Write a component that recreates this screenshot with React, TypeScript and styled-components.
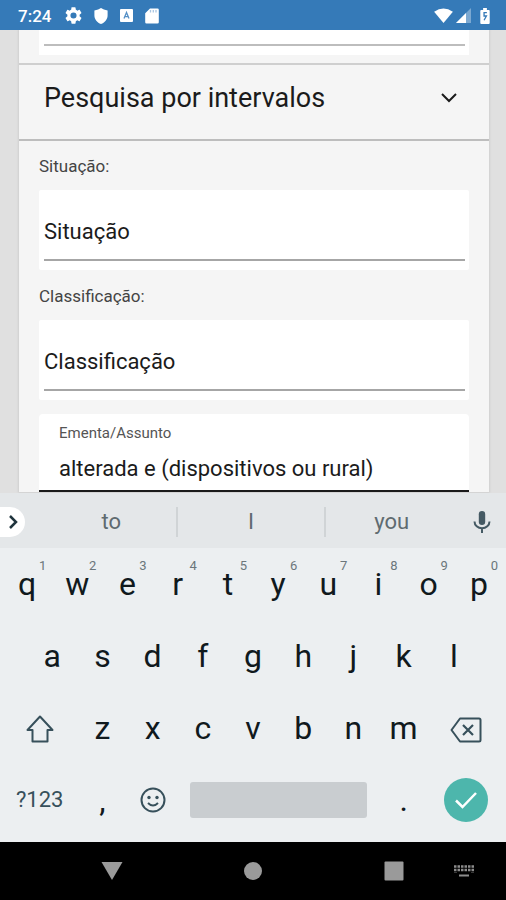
import React from "react";
import styled, { createGlobalStyle } from "styled-components";

const GlobalStyle = createGlobalStyle`
  *, *::before, *::after { box-sizing: border-box; }
  body {
    margin: 0;
    background: #000;
    font-family: Roboto, "Liberation Sans", sans-serif;
    color: #1b1b1b;
  }
  button, input {
    font: inherit;
    color: inherit;
    border: 0;
    padding: 0;
    margin: 0;
    background: none;
    border-radius: 0;
    outline: none;
  }
  svg { display: block; }
`;

const Screen = styled.div`
  display: flex;
  flex-direction: column;
  height: 100vh;
  min-height: 600px;
`;

const StatusBar = styled.header`
  display: flex;
  flex: none;
  align-items: center;
  height: 30px;
  padding: 1px 16px 0 18px;
  background: #357ab8;
  color: #fff;
`;

const Clock = styled.span`
  font-size: 17px;
  font-weight: 500;
  line-height: 20px;
`;

const StatusGroup = styled.div`
  display: flex;
  align-items: center;
  gap: 12px;
  margin-left: 14px;
`;

const SignalGroup = styled.div`
  display: flex;
  align-items: center;
  gap: 3px;
  margin-left: auto;
  margin-right: 9px;
`;

const Viewport = styled.main`
  flex: 1;
  min-height: 0;
  overflow: hidden;
  padding: 0 17px 0 19px;
  background: #e0e0e0;
`;

const Card = styled.form`
  background: #f5f5f5;
  box-shadow: 0 0 2px 1px #cfcfcf;
`;

const PreviousSection = styled.div`
  padding: 0 20px 8px;
  border-bottom: 2px solid #cfcfcf;
`;

const PreviousField = styled.div`
  height: 25px;
  padding: 14px 4px 0 5px;
  background: #fff;

  &::before {
    content: "";
    display: block;
    height: 2px;
    background: #bdbdbd;
  }
`;

const SectionToggle = styled.button`
  display: flex;
  align-items: center;
  justify-content: space-between;
  width: 100%;
  height: 76px;
  padding: 0 31px 8px 25px;
  border-bottom: 2px solid #bdbdbd;
  font-size: 27px;
  line-height: 32px;
  text-align: left;
  cursor: pointer;
`;

const Section = styled.div`
  padding: 13px 20px 0;
`;

const FieldLabel = styled.label`
  display: block;
  margin-bottom: 11px;
  color: #444;
  font-size: 17px;
  line-height: 25px;
`;

const SelectBox = styled.div`
  height: 80px;
  margin-bottom: 14px;
  padding: 12px 4px 9px 5px;
  border-radius: 2px;
  background: #fff;
`;

const SelectInput = styled.input`
  display: block;
  width: 100%;
  height: 59px;
  padding-top: 2px;
  border-bottom: 2px solid #a6a6a6;
  font-size: 22px;
  line-height: 28px;

  &::placeholder {
    color: #1b1b1b;
    opacity: 1;
  }
`;

const TextBox = styled.div`
  padding: 8px 0 0;
  border-radius: 4px 4px 0 0;
  background: #fff;
`;

const FloatingLabel = styled.label`
  display: block;
  padding: 0 20px;
  color: #555;
  font-size: 15px;
  line-height: 22px;
`;

const TextInput = styled.input`
  display: block;
  width: 100%;
  height: 48px;
  padding: 2px 20px 0;
  border-bottom: 2px solid #1b1b1b;
  font-size: 22px;
  line-height: 28px;
`;

const Keyboard = styled.section`
  flex: none;
  padding-bottom: 6px;
  background: #eceff1;
`;

const Suggestions = styled.div`
  display: grid;
  grid-template-columns: 46px 9fr 10fr 9fr 48px;
  align-items: center;
  height: 55px;
  padding-top: 2px;
  background: #e4e7e9;
`;

const ExpandButton = styled.button`
  display: flex;
  align-items: center;
  justify-content: center;
  width: 25px;
  height: 30px;
  border-radius: 0 15px 15px 0;
  background: #fff;
`;

const Suggestion = styled.button<{ $divided?: boolean }>`
  height: 30px;
  border-right: ${(p) => (p.$divided ? "2px solid #d0d4d6" : "0")};
  color: #5f6b70;
  font-size: 22px;
  line-height: 28px;
`;

const MicButton = styled.button`
  display: flex;
  justify-content: center;
`;

const Keys = styled.div`
  display: grid;
  grid-template-columns: repeat(20, 1fr);
  grid-auto-rows: 72px;
  padding: 0 2px;
`;

const Key = styled.button<{ $span?: number; $start?: number; $small?: boolean }>`
  position: relative;
  display: flex;
  align-items: center;
  justify-content: center;
  grid-column: ${(p) => (p.$start ? p.$start : "auto")} / span ${(p) => p.$span ?? 2};
  color: ${(p) => (p.$small ? "#37505b" : "#10191d")};
  font-size: ${(p) => (p.$small ? "22px" : "32px")};
  line-height: 40px;
`;

const KeyHint = styled.span`
  position: absolute;
  top: 10px;
  right: 6px;
  color: #6b767b;
  font-size: 13px;
  line-height: 16px;
`;

const SpaceKey = styled.button`
  grid-column: span 8;
  align-self: center;
  height: 36px;
  margin: 0 12px;
  border-radius: 3px;
  background: #c9cdd0;
`;

const EnterDisc = styled.span`
  display: flex;
  align-items: center;
  justify-content: center;
  width: 44px;
  height: 44px;
  border-radius: 50%;
  background: #4db6ac;
`;

const NavBar = styled.nav`
  display: grid;
  flex: none;
  grid-template-columns: repeat(36, 1fr);
  align-items: center;
  height: 58px;
  background: #000;
`;

const NavButton = styled.button<{ $from: number; $to: number }>`
  display: flex;
  justify-content: center;
  grid-column: ${(p) => p.$from} / ${(p) => p.$to};
  grid-row: 1;
`;

const GearIcon = () => (
  <svg width="17" height="17" viewBox="2 2 20 20" fill="#fff" aria-hidden="true">
    <path d="M19.14 12.94c.04-.3.06-.61.06-.94s-.02-.64-.07-.94l2.03-1.58a.49.49 0 0 0 .12-.61l-1.92-3.32a.49.49 0 0 0-.59-.22l-2.39.96a7 7 0 0 0-1.62-.94l-.36-2.54a.48.48 0 0 0-.48-.41h-3.84c-.24 0-.43.17-.47.41l-.36 2.54c-.59.24-1.13.57-1.62.94l-2.39-.96a.48.48 0 0 0-.59.22L2.74 8.87a.48.48 0 0 0 .12.61l2.03 1.58c-.05.3-.09.63-.09.94s.02.64.07.94l-2.03 1.58a.49.49 0 0 0-.12.61l1.92 3.32c.12.22.37.29.59.22l2.39-.96c.5.38 1.03.7 1.62.94l.36 2.54c.05.24.24.41.48.41h3.84c.24 0 .44-.17.47-.41l.36-2.54c.59-.24 1.13-.56 1.62-.94l2.39.96c.22.08.47 0 .59-.22l1.92-3.32a.48.48 0 0 0-.12-.61zM12 15.6a3.6 3.6 0 1 1 0-7.2 3.6 3.6 0 0 1 0 7.2z" />
  </svg>
);

const ShieldIcon = () => (
  <svg width="14" height="16" viewBox="0 0 14 16" fill="#fff" aria-hidden="true">
    <path d="M7 0 Q9.5 2 13.6 2.4 V7.5 C13.6 11.5 10.6 14.6 7 16 C3.4 14.6 .4 11.5 .4 7.5 V2.4 Q4.5 2 7 0z" />
  </svg>
);

const KeyboardBadgeIcon = () => (
  <svg width="13" height="13" viewBox="0 0 13 13" aria-hidden="true">
    <rect width="13" height="13" rx="1" fill="#fff" />
    <path d="M4 9.5 6.5 3.5 9 9.5M4.800 7.700h3.400" fill="none" stroke="#5590c6" strokeWidth="1.300" />
  </svg>
);

const SdCardIcon = () => (
  <svg width="14" height="16" viewBox="0 0 14 16" aria-hidden="true">
    <path d="M5 .5h7.500A1.300 1.300 0 0 1 13.800 1.800v12.400a1.300 1.300 0 0 1-1.300 1.300h-11A1.300 1.300 0 0 1 .2 14.200V5.200z" fill="#fff" />
    <path d="M5.500 2v2.500M8.300 2v2.500M11 2v2.500" stroke="#a9c6e2" strokeWidth="1.300" />
  </svg>
);

const WifiIcon = () => (
  <svg width="19" height="15" viewBox="0 0 20 16" fill="#fff" aria-hidden="true">
    <path d="M0 4 Q10-3 20 4 L10 16z" />
  </svg>
);

const SignalIcon = () => (
  <svg width="15" height="15" viewBox="0 0 15 15" aria-hidden="true">
    <path d="M15 0v15H0z" fill="#fff" opacity=".35" />
    <path d="M10 5v10H0z" fill="#fff" />
  </svg>
);

const BatteryIcon = () => (
  <svg width="10" height="16" viewBox="0 0 10 17" aria-hidden="true">
    <path d="M3 0h4v2h2a1 1 0 0 1 1 1v13a1 1 0 0 1-1 1H1a1 1 0 0 1-1-1V3a1 1 0 0 1 1-1h2z" fill="#fff" />
    <path d="M7 5H4V8.500h2.500L4 13" fill="none" stroke="#357ab8" strokeWidth="1.400" />
  </svg>
);

const ChevronDown = () => (
  <svg width="18" height="12" viewBox="0 0 18 12" fill="none" stroke="#1b1b1b" strokeWidth="2" aria-hidden="true">
    <path d="M2 2 9 9 16 2" />
  </svg>
);

const ChevronRight = () => (
  <svg width="10" height="14" viewBox="0 0 10 14" fill="none" stroke="#1f343d" strokeWidth="2.500" aria-hidden="true">
    <path d="M2 1 8 7 2 13" />
  </svg>
);

const MicIcon = () => (
  <svg width="18" height="24" viewBox="0 0 18 24" aria-hidden="true">
    <rect x="5.800" y="1" width="6.400" height="14" rx="3.200" fill="#455a64" />
    <path d="M1.500 11.500a7.500 6.800 0 0 0 15 0M9 18.500V23" fill="none" stroke="#455a64" strokeWidth="2" />
  </svg>
);

const ShiftIcon = () => (
  <svg width="28" height="30" viewBox="0 -2 28 30" fill="none" stroke="#37505b" strokeWidth="2" strokeLinejoin="round" aria-hidden="true">
    <path d="M14 1.500 26.500 15H21.500V26.500H6.500V15H1.500z" />
  </svg>
);

const BackspaceIcon = () => (
  <svg width="32" height="30" viewBox="0 -4 32 30" fill="none" stroke="#37505b" strokeWidth="2" strokeLinejoin="round" aria-hidden="true">
    <path d="M10 1.500H29A1.500 1.500 0 0 1 30.500 3V23A1.500 1.500 0 0 1 29 24.500H10L1.500 13z" />
    <path d="M13 8 23 18M23 8 13 18" strokeWidth="2.200" />
  </svg>
);

const SmileIcon = () => (
  <svg width="26" height="26" viewBox="0 0 26 26" aria-hidden="true">
    <circle cx="13" cy="13" r="11.500" fill="none" stroke="#37505b" strokeWidth="2" />
    <circle cx="9" cy="10.500" r="1.700" fill="#37505b" />
    <circle cx="17" cy="10.500" r="1.700" fill="#37505b" />
    <path d="M8 16 Q13 21 18 16" fill="none" stroke="#37505b" strokeWidth="2" />
  </svg>
);

const CheckIcon = () => (
  <svg width="24" height="18" viewBox="0 0 24 18" fill="none" stroke="#fff" strokeWidth="2.500" aria-hidden="true">
    <path d="M2 9.500 8.500 16 22 2" />
  </svg>
);

const BackIcon = () => (
  <svg width="22" height="18" viewBox="0 0 22 18" fill="#9a9a9a" aria-hidden="true">
    <path d="M.5 0h21L11 18z" />
  </svg>
);

const HomeIcon = () => (
  <svg width="18" height="18" viewBox="0 0 18 18" fill="#9a9a9a" aria-hidden="true">
    <circle cx="9" cy="9" r="9" />
  </svg>
);

const RecentsIcon = () => (
  <svg width="20" height="20" viewBox="0 0 20 20" fill="#9a9a9a" aria-hidden="true">
    <rect x=".5" y=".5" width="19" height="19" rx="1" />
  </svg>
);

const KeyboardIcon = () => (
  <svg width="20" height="12" viewBox="0 0 20 12" aria-hidden="true">
    <path d="M0 1.500h20M0 5h20" stroke="#8c8c8c" strokeWidth="2.500" strokeDasharray="2.500 1" />
    <path d="M0 7.500h3M17 7.500h3" stroke="#8c8c8c" strokeWidth="1" opacity=".4" />
    <path d="M5 10.500h10" stroke="#8c8c8c" strokeWidth="2" />
  </svg>
);

const topRow = ["q", "w", "e", "r", "t", "y", "u", "i", "o", "p"];
const homeRow = ["a", "s", "d", "f", "g", "h", "j", "k", "l"];
const bottomRow = ["z", "x", "c", "v", "b", "n", "m"];

export default function App() {
  return (
    <>
      <GlobalStyle />
      <Screen>
        <StatusBar>
          <Clock>7:24</Clock>
          <StatusGroup>
            <GearIcon />
            <ShieldIcon />
            <KeyboardBadgeIcon />
            <SdCardIcon />
          </StatusGroup>
          <SignalGroup>
            <WifiIcon />
            <SignalIcon />
          </SignalGroup>
          <BatteryIcon />
        </StatusBar>

        <Viewport>
          <Card>
            <PreviousSection>
              <PreviousField />
            </PreviousSection>
            <SectionToggle type="button" aria-expanded="false">
              Pesquisa por intervalos
              <ChevronDown />
            </SectionToggle>
            <Section>
              <FieldLabel htmlFor="situacao">Situação:</FieldLabel>
              <SelectBox>
                <SelectInput id="situacao" placeholder="Situação" />
              </SelectBox>
              <FieldLabel htmlFor="classificacao">Classificação:</FieldLabel>
              <SelectBox>
                <SelectInput id="classificacao" placeholder="Classificação" />
              </SelectBox>
              <TextBox>
                <FloatingLabel htmlFor="ementa">Ementa/Assunto</FloatingLabel>
                <TextInput id="ementa" defaultValue="alterada e (dispositivos ou rural)" spellCheck={false} />
              </TextBox>
            </Section>
          </Card>
        </Viewport>

        <Keyboard>
          <Suggestions>
            <ExpandButton type="button" aria-label="Expandir">
              <ChevronRight />
            </ExpandButton>
            <Suggestion type="button" $divided>to</Suggestion>
            <Suggestion type="button" $divided>I</Suggestion>
            <Suggestion type="button">you</Suggestion>
            <MicButton type="button" aria-label="Voz">
              <MicIcon />
            </MicButton>
          </Suggestions>
          <Keys>
            {topRow.map((k, i) => (
              <Key key={k} type="button">
                {k}
                <KeyHint>{(i + 1) % 10}</KeyHint>
              </Key>
            ))}
            {homeRow.map((k, i) => (
              <Key key={k} type="button" $start={i === 0 ? 2 : undefined}>
                {k}
              </Key>
            ))}
            <Key type="button" $start={1} $span={3} aria-label="Maiúsculas">
              <ShiftIcon />
            </Key>
            {bottomRow.map((k) => (
              <Key key={k} type="button">
                {k}
              </Key>
            ))}
            <Key type="button" $span={3} aria-label="Apagar">
              <BackspaceIcon />
            </Key>
            <Key type="button" $span={3} $small>?123</Key>
            <Key type="button">,</Key>
            <Key type="button" aria-label="Emoji">
              <SmileIcon />
            </Key>
            <SpaceKey type="button" aria-label="Espaço" />
            <Key type="button">.</Key>
            <Key type="button" $span={3} aria-label="Concluir">
              <EnterDisc>
                <CheckIcon />
              </EnterDisc>
            </Key>
          </Keys>
        </Keyboard>

        <NavBar>
          <NavButton type="button" $from={4} $to={14} aria-label="Voltar">
            <BackIcon />
          </NavButton>
          <NavButton type="button" $from={14} $to={24} aria-label="Início">
            <HomeIcon />
          </NavButton>
          <NavButton type="button" $from={26} $to={32} aria-label="Recentes">
            <RecentsIcon />
          </NavButton>
          <NavButton type="button" $from={32} $to={36} aria-label="Teclado">
            <KeyboardIcon />
          </NavButton>
        </NavBar>
      </Screen>
    </>
  );
}
